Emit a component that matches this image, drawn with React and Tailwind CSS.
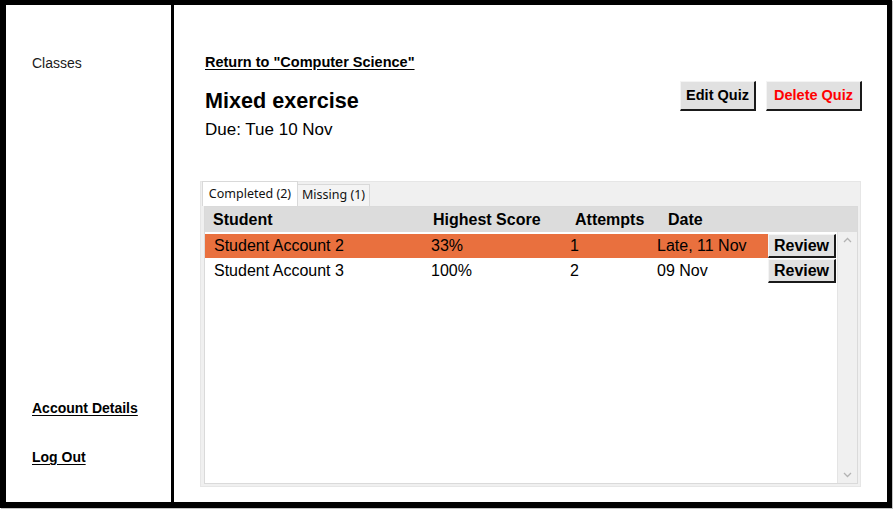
import React from "react";

const rows = [
  { name: "Student Account 2", score: "33%", attempts: "1", date: "Late, 11 Nov", late: true },
  { name: "Student Account 3", score: "100%", attempts: "2", date: "09 Nov", late: false },
];

export default function App() {
  return (
    <div className="w-[895px] h-[509px] bg-white" style={{ fontFamily: '"Liberation Sans", Arial, sans-serif' }}>
      <div className="w-[892px] h-[508px] border-black border-t-[5px] border-r-[5px] border-l-[6px] border-b-[6px] shadow-[1px_1px_0_#c4c4c4] flex text-black">
        {/* Sidebar */}
        <div className="w-[168px] shrink-0 border-r-[3px] border-black flex flex-col justify-between pl-[26px] pt-[50px] pb-[37px]">
          <div className="text-[14px] leading-[16px] text-[#1a1a1a]">Classes</div>
          <div className="flex flex-col gap-[33px]">
            <div className="text-[14px] leading-[16px] font-bold underline underline-offset-[2px]">Account Details</div>
            <div className="text-[14px] leading-[16px] font-bold underline underline-offset-[2px]">Log Out</div>
          </div>
        </div>

        {/* Main */}
        <div className="flex-1 flex flex-col pl-[26px] pr-[25px] pt-[49px]">
          <div className="flex justify-between">
            <div className="flex flex-col pl-[5px]">
              <div className="text-[14.5px] leading-[17px] font-bold underline underline-offset-[2px]">Return to "Computer Science"</div>
              <div className="mt-[17px] text-[21.6px] leading-[26px] font-bold">Mixed exercise</div>
              <div className="mt-[6px] text-[17px] leading-[20px]">Due: Tue 10 Nov</div>
            </div>
            <div className="flex gap-[10px] mt-[27px] h-[30px]">
              <div className="w-[76px] h-[30px] bg-[#e1e1e1] border-t border-l border-[#f4f4f4] border-r-2 border-b-2 border-r-[#1a1a1a] border-b-[#1a1a1a] flex items-center justify-center text-[14.5px] font-bold">Edit Quiz</div>
              <div className="w-[96px] h-[30px] bg-[#e1e1e1] border-t border-l border-[#f4f4f4] border-r-2 border-b-2 border-r-[#1a1a1a] border-b-[#1a1a1a] flex items-center justify-center text-[14.5px] font-bold text-[#ff0000]">Delete Quiz</div>
            </div>
          </div>

          {/* Tab panel */}
          <div className="mt-[41px] w-[661px] h-[306px] bg-[#f0f0f0] border border-[#e6e6e6] flex flex-col pl-[3px] pr-[2px] pb-[2px]">
            <div className="h-[24px] flex items-end" style={{ fontFamily: '"Noto Sans", "Open Sans", sans-serif' }}>
              <div className="h-[25px] w-[96px] bg-white border-l border-t border-r border-[#d9d9d9] flex items-center justify-center text-[12.5px] text-[#111] -ml-[2px] self-end">Completed (2)</div>
              <div className="h-[22px] w-[72px] bg-[#f4f4f4] border-t border-r border-[#d9d9d9] flex items-center justify-center text-[12.5px] text-[#111]">Missing (1)</div>
            </div>
            <div className="flex-1 bg-white border border-[#dadada] flex flex-col">
              <div className="h-[25px] bg-[#dcdcdc] flex items-center text-[16px] font-bold shrink-0">
                <div className="w-[228px] pl-[8px]">Student</div>
                <div className="w-[142px]">Highest Score</div>
                <div className="w-[93px]">Attempts</div>
                <div>Date</div>
              </div>
              <div className="flex-1 flex">
                <div className="flex-1 flex flex-col gap-[1px] pt-[2px]">
                  {rows.map((r) => (
                    <div key={r.name} className="flex h-[24px] text-[16px]">
                      <div className={`flex-1 flex items-center ${r.late ? "bg-[#e9703e]" : ""}`}>
                        <div className="w-[226px] pl-[9px]">{r.name}</div>
                        <div className="w-[139px]">{r.score}</div>
                        <div className="w-[87px]">{r.attempts}</div>
                        <div>{r.date}</div>
                      </div>
                      <div className="w-[68px] h-[24px] bg-[#e1e1e1] border-t border-l border-[#f4f4f4] border-r-2 border-b-2 border-r-[#1a1a1a] border-b-[#1a1a1a] flex items-center justify-center font-bold text-[16px]">Review</div>
                    </div>
                  ))}
                </div>
                <div className="w-[20px] ml-[1px] bg-[#f0f0f0] border-l border-[#e4e4e4] flex flex-col justify-between items-center py-[5px]">
                  <svg width="9" height="6" viewBox="0 0 9 6"><path d="M1 5 L4.5 1.5 L8 5" fill="none" stroke="#b3b3b3" strokeWidth="1.3" /></svg>
                  <svg width="9" height="6" viewBox="0 0 9 6"><path d="M1 1 L4.5 4.5 L8 1" fill="none" stroke="#b3b3b3" strokeWidth="1.3" /></svg>
                </div>
              </div>
            </div>
          </div>
        </div>
      </div>
    </div>
  );
}
